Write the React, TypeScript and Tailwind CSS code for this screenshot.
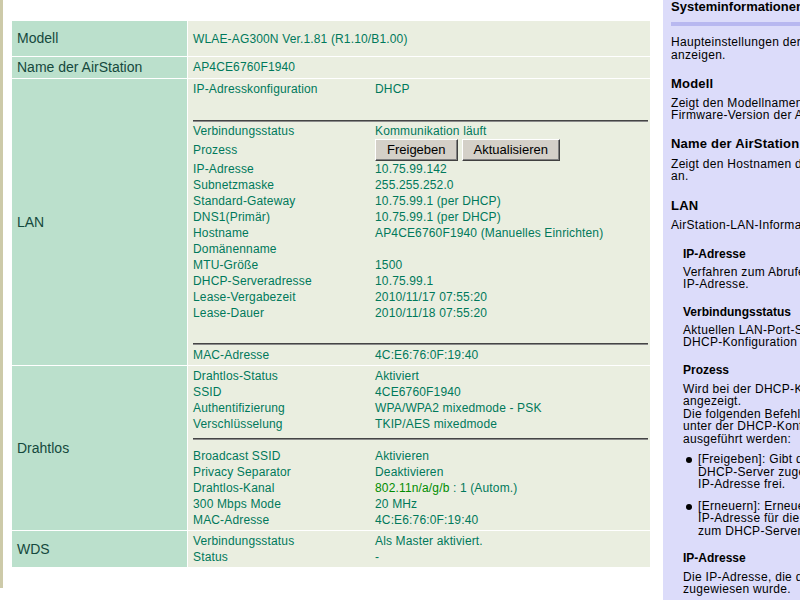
type Pair = [string, React.ReactNode];

const lanTop: Pair[] = [["IP-Adresskonfiguration", "DHCP"]];

const lanMain: Pair[] = [
  ["IP-Adresse", "10.75.99.142"],
  ["Subnetzmaske", "255.255.252.0"],
  ["Standard-Gateway", "10.75.99.1 (per DHCP)"],
  ["DNS1(Primär)", "10.75.99.1 (per DHCP)"],
  ["Hostname", "AP4CE6760F1940 (Manuelles Einrichten)"],
  ["Domänenname", ""],
  ["MTU-Größe", "1500"],
  ["DHCP-Serveradresse", "10.75.99.1"],
  ["Lease-Vergabezeit", "2010/11/17 07:55:20"],
  ["Lease-Dauer", "2010/11/18 07:55:20"],
];

const wlanTop: Pair[] = [
  ["Drahtlos-Status", "Aktiviert"],
  ["SSID", "4CE6760F1940"],
  ["Authentifizierung", "WPA/WPA2 mixedmode - PSK"],
  ["Verschlüsselung", "TKIP/AES mixedmode"],
];

const wlanBottom: Pair[] = [
  ["Broadcast SSID", "Aktivieren"],
  ["Privacy Separator", "Deaktivieren"],
  [
    "Drahtlos-Kanal",
    <>
      <span className="text-[#008c00]">802.11n/a/g/b</span> : 1 (Autom.)
    </>,
  ],
  ["300 Mbps Mode", "20 MHz"],
  ["MAC-Adresse", "4C:E6:76:0F:19:40"],
];

const wds: Pair[] = [
  ["Verbindungsstatus", "Als Master aktiviert."],
  ["Status", "-"],
];

function Line({ label, value }: { label: string; value: React.ReactNode }) {
  return (
    <div className="grid h-4 grid-cols-[182px_1fr] leading-4 whitespace-nowrap">
      <span>{label}</span>
      <span>{value}</span>
    </div>
  );
}

function Lines({ rows }: { rows: Pair[] }) {
  return (
    <>
      {rows.map(([l, v], i) => (
        <Line key={l + i} label={l} value={v} />
      ))}
    </>
  );
}

function Rule({ className = "" }: { className?: string }) {
  return <div className={"border-t border-b border-t-[#454545] border-b-[#8a8a8a] " + className} />;
}

function Btn({ children }: { children: string }) {
  return (
    <button className="h-[22px] border border-t-white border-l-white border-r-[#404040] border-b-[#404040] bg-[#d4d0c8] px-[11px] text-[13px] leading-[18px] tracking-normal text-black shadow-[inset_-1px_-1px_#808080]">
      {children}
    </button>
  );
}

function Row({ label, children, className = "" }: { label: string; children: React.ReactNode; className?: string }) {
  return (
    <div className="grid grid-cols-[175px_462px] gap-px">
      <div className="flex items-center bg-[#bbe0cc] pl-[5px] text-[14px] text-[#15493d]">{label}</div>
      <div className={"bg-[#eaeee0] pr-[2px] pl-[5px] text-[12px] tracking-[0.15px] text-[#00795b] " + className}>
        {children}
      </div>
    </div>
  );
}

function Help() {
  return (
    <aside className="ml-[13px] h-[600px] w-[260px] shrink-0 overflow-hidden bg-[#dcdcfa] pl-[8px] text-[12px] leading-[12.5px] tracking-[0.3px] whitespace-nowrap text-black">
      <h1 className="text-[13px] leading-[14px] font-bold tracking-normal">Systeminformationen</h1>
      <div className="mt-[8px] h-[4px] bg-[#b8b8f0]" />
      <p className="mt-[10px]">
        Haupteinstellungen der AirStation
        <br />
        anzeigen.
      </p>

      <h2 className="mt-[15.5px] text-[13px] leading-[14px] font-bold tracking-[0.2px]">Modell</h2>
      <p className="mt-[6px]">
        Zeigt den Modellnamen und die
        <br />
        Firmware-Version der AirStation an.
      </p>

      <h2 className="mt-[15px] text-[13px] leading-[14px] font-bold tracking-[0.2px]">Name der AirStation</h2>
      <p className="mt-[7px]">
        Zeigt den Hostnamen der AirStation
        <br />
        an.
      </p>

      <h2 className="mt-[16px] text-[13px] leading-[14px] font-bold tracking-[0.2px]">LAN</h2>
      <p className="mt-[6px]">AirStation-LAN-Informationen.</p>

      <div className="pl-[12px]">
        <h3 className="mt-[15.5px] leading-[14px] font-bold tracking-normal">IP-Adresse</h3>
        <p className="mt-[5px]">
          Verfahren zum Abrufen der
          <br />
          IP-Adresse.
        </p>

        <h3 className="mt-[14px] leading-[14px] font-bold tracking-normal">Verbindungsstatus</h3>
        <p className="mt-[5px]">
          Aktuellen LAN-Port-Status der
          <br />
          DHCP-Konfiguration anzeigen.
        </p>

        <h3 className="mt-[14px] leading-[14px] font-bold tracking-normal">Prozess</h3>
        <p className="mt-[6px]">
          Wird bei der DHCP-Konfiguration
          <br />
          angezeigt.
          <br />
          Die folgenden Befehle können
          <br />
          unter der DHCP-Konfiguration
          <br />
          ausgeführt werden:
        </p>
        <ul className="mt-[8px]">
          <li className="flex">
            <span className="mt-[4px] ml-[3px] h-[6px] w-[6px] shrink-0 rounded-full bg-black" />
            <span className="ml-[6px]">
              [Freigeben]: Gibt die vom
              <br />
              DHCP-Server zugewiesene
              <br />
              IP-Adresse frei.
            </span>
          </li>
          <li className="mt-[9px] flex">
            <span className="mt-[4px] ml-[3px] h-[6px] w-[6px] shrink-0 rounded-full bg-black" />
            <span className="ml-[6px]">
              [Erneuern]: Erneuert die
              <br />
              IP-Adresse für die Verbindung
              <br />
              zum DHCP-Server.
            </span>
          </li>
        </ul>

        <h3 className="mt-[13.5px] leading-[14px] font-bold tracking-normal">IP-Adresse</h3>
        <p className="mt-[6px]">
          Die IP-Adresse, die der AirStation
          <br />
          zugewiesen wurde.
        </p>
      </div>
    </aside>
  );
}

export default function App() {
  return (
    <div className="flex h-[600px] w-[800px] overflow-hidden bg-white font-['Liberation_Sans',Arial,sans-serif]">
      <div className="h-[588px] w-[3px] shrink-0 bg-[#cdcaa9]" />
      <main className="box-content w-[638px] shrink-0 pt-[21px] pl-[9px]">
        <div className="flex flex-col gap-px">
          <Row label="Modell" className="flex h-[35px] items-center">
            WLAE-AG300N Ver.1.81 (R1.10/B1.00)
          </Row>
          <Row label="Name der AirStation" className="py-[2px] leading-4">
            AP4CE6760F1940
          </Row>
          <Row label="LAN" className="py-[2px]">
            <Lines rows={lanTop} />
            <Rule className="mt-[23px]" />
            <div className="mt-px">
              <Line label="Verbindungsstatus" value="Kommunikation läuft" />
              <div className="grid h-[22px] grid-cols-[182px_1fr] items-center">
                <span>Prozess</span>
                <div className="flex gap-[4px]">
                  <Btn>Freigeben</Btn>
                  <Btn>Aktualisieren</Btn>
                </div>
              </div>
              <Lines rows={lanMain} />
            </div>
            <Rule className="mt-[22px]" />
            <div className="mt-[2px]">
              <Line label="MAC-Adresse" value="4C:E6:76:0F:19:40" />
            </div>
          </Row>
          <Row label="Drahtlos" className="py-[2px]">
            <Lines rows={wlanTop} />
            <Rule className="mt-[6px]" />
            <div className="mt-[8px]">
              <Lines rows={wlanBottom} />
            </div>
          </Row>
          <Row label="WDS" className="py-[2px]">
            <Lines rows={wds} />
          </Row>
        </div>
      </main>
      <Help />
    </div>
  );
}
